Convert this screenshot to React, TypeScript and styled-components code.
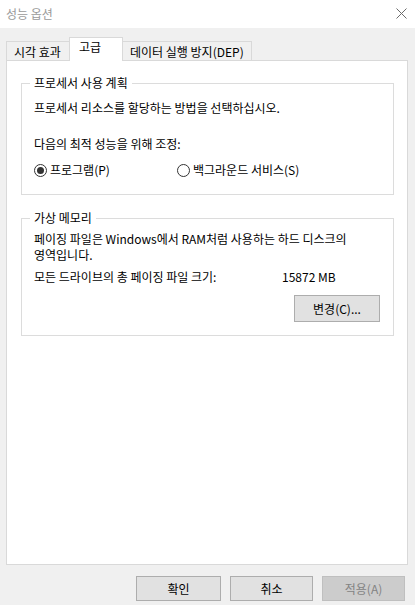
import React from 'react';
import styled, { createGlobalStyle } from 'styled-components';

const GlobalStyle = createGlobalStyle`
  html, body {
    margin: 0;
    padding: 0;
    background: #f0f0f0;
  }
  body {
    font-family: "Noto Sans CJK KR", "Noto Sans", sans-serif;
    font-size: 12px;
    color: #000;
  }
`;

const Window = styled.div`
  width: 415px;
  height: 605px;
  background: #f0f0f0;
  display: flex;
  flex-direction: column;
  overflow: hidden;
`;

const TitleBar = styled.div`
  height: 28px;
  background: #fff;
  display: flex;
  align-items: center;
  justify-content: space-between;
  padding: 0 8px 0 6px;
  box-sizing: border-box;
`;

const Title = styled.span`
  color: #9a9a9a;
  font-size: 12px;
  line-height: 16px;
`;

const CloseButton = styled.div`
  width: 11px;
  height: 11px;
  display: flex;
  margin-top: -1px;
`;

const TabRow = styled.div`
  display: flex;
  align-items: flex-end;
  margin: 9px 0 -1px 6px;
  height: 24px;
  position: relative;
  z-index: 1;
`;

const Tab = styled.div<{ $active?: boolean }>`
  box-sizing: border-box;
  height: ${p => (p.$active ? '24px' : '20px')};
  width: ${p => p.$w}px;
  padding: ${p => (p.$active ? '1px 0 0 9px' : '2px 0 0 7px')};
  background: ${p => (p.$active ? '#fff' : '#f0f0f0')};
  border: 1px solid #d9d9d9;
  border-bottom: ${p => (p.$active ? 'none' : '1px solid #d9d9d9')};
  line-height: 16px;
  white-space: nowrap;
  margin-left: ${p => (p.$active ? '-1px' : '0')};
  margin-right: ${p => (p.$active ? '-1px' : '0')};
  position: relative;
  z-index: ${p => (p.$active ? 2 : 1)};
`;

const Panel = styled.div`
  box-sizing: border-box;
  height: 505px;
  margin: 0 7px 0 6px;
  background: #fff;
  border: 1px solid #d9d9d9;
  padding: 22px 13px 0 14px;
  display: flex;
  flex-direction: column;
  gap: 23px;
`;

const GroupBox = styled.div<{ $pb: number }>`
  border: 1px solid #dcdcdc;
  padding: 0 12px ${p => p.$pb}px 12px;
  display: flex;
  flex-direction: column;
`;

const Legend = styled.div`
  width: fit-content;
  margin: -9px 0 0 -4px;
  padding: 0 4px;
  background: #fff;
  line-height: 16px;
`;

const Line = styled.div<{ $mt: number }>`
  margin-top: ${p => p.$mt}px;
  line-height: 16px;
  white-space: nowrap;
`;

const RadioRow = styled.div`
  margin-top: 10px;
  display: flex;
  align-items: center;
  height: 16px;
`;

const RadioOption = styled.label<{ $w?: number }>`
  display: flex;
  align-items: center;
  gap: 3px;
  width: ${p => (p.$w ? `${p.$w}px` : 'auto')};
  line-height: 16px;
`;

const RadioCircle = styled.span<{ $checked?: boolean }>`
  box-sizing: border-box;
  width: 13px;
  height: 13px;
  border-radius: 50%;
  border: 1px solid #333;
  background: #fff;
  display: flex;
  align-items: center;
  justify-content: center;

  &::after {
    content: '';
    width: 7px;
    height: 7px;
    border-radius: 50%;
    background: #333;
    display: ${p => (p.$checked ? 'block' : 'none')};
  }
`;

const InfoRow = styled.div`
  margin-top: 6px;
  display: grid;
  grid-template-columns: 248px auto;
  line-height: 16px;
`;

const ButtonRow = styled.div<{ $mt: number; $pr: number; $gap: number }>`
  display: flex;
  justify-content: flex-end;
  gap: ${p => p.$gap}px;
  margin-top: ${p => p.$mt}px;
  padding-right: ${p => p.$pr}px;
`;

const Button = styled.button<{ $w: number; $h: number; $disabled?: boolean }>`
  box-sizing: border-box;
  width: ${p => p.$w}px;
  height: ${p => p.$h}px;
  font-family: "Noto Sans CJK KR", "Noto Sans", sans-serif;
  font-size: 12px;
  line-height: 16px;
  padding: 0;
  background: ${p => (p.$disabled ? '#cccccc' : '#e1e1e1')};
  border: 1px solid ${p => (p.$disabled ? '#bfbfbf' : '#adadad')};
  color: ${p => (p.$disabled ? '#838383' : '#000')};
  border-radius: 0;
`;

const CloseIcon = () => (
  <svg width="11" height="11" viewBox="0 0 11 11">
    <path d="M0.5 0.5 L10.5 10.5 M10.5 0.5 L0.5 10.5" stroke="#6b6b6b" strokeWidth="1" />
  </svg>
);

export default function App() {
  return (
    <Window>
      <GlobalStyle />
      <TitleBar>
        <Title>성능 옵션</Title>
        <CloseButton>
          <CloseIcon />
        </CloseButton>
      </TitleBar>

      <TabRow>
        <Tab $w={64}>시각 효과</Tab>
        <Tab $w={54} $active>고급</Tab>
        <Tab $w={130}>데이터 실행 방지(DEP)</Tab>
      </TabRow>

      <Panel>
        <GroupBox $pb={16}>
          <Legend>프로세서 사용 계획</Legend>
          <Line $mt={9}>프로세서 리소스를 할당하는 방법을 선택하십시오.</Line>
          <Line $mt={20}>다음의 최적 성능을 위해 조정:</Line>
          <RadioRow>
            <RadioOption $w={143}>
              <RadioCircle $checked />
              프로그램(P)
            </RadioOption>
            <RadioOption>
              <RadioCircle />
              백그라운드 서비스(S)
            </RadioOption>
          </RadioRow>
        </GroupBox>

        <GroupBox $pb={13}>
          <Legend>가상 메모리</Legend>
          <Line $mt={5}>
            페이징 파일은 Windows에서 RAM처럼 사용하는 하드 디스크의
            <br />
            영역입니다.
          </Line>
          <InfoRow>
            <span>모든 드라이브의 총 페이징 파일 크기:</span>
            <span>15872 MB</span>
          </InfoRow>
          <ButtonRow $mt={10} $pr={1} $gap={0}>
            <Button $w={86} $h={27}>변경(C)...</Button>
          </ButtonRow>
        </GroupBox>
      </Panel>

      <ButtonRow $mt={11} $pr={10} $gap={9}>
        <Button $w={85} $h={25}>확인</Button>
        <Button $w={83} $h={25}>취소</Button>
        <Button $w={83} $h={25} $disabled>적용(A)</Button>
      </ButtonRow>
    </Window>
  );
}
